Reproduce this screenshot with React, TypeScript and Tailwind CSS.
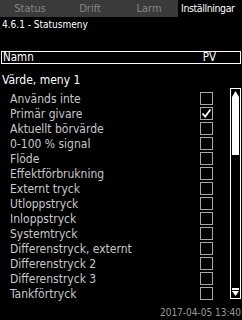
const items = [
  "Används inte",
  "Primär givare",
  "Aktuellt börvärde",
  "0-100 % signal",
  "Flöde",
  "Effektförbrukning",
  "Externt tryck",
  "Utloppstryck",
  "Inloppstryck",
  "Systemtryck",
  "Differenstryck, externt",
  "Differenstryck 2",
  "Differenstryck 3",
  "Tankförtryck",
];

const font = { fontFamily: '"DejaVu Sans Condensed", "DejaVu Sans", sans-serif' };

function Box({ checked }: { checked?: boolean }) {
  return (
    <div className="flex h-[13px] w-[13px] items-center justify-center border border-[#a8a8a8]">
      {checked ? (
        <svg width="11" height="11" viewBox="0 0 11 11">
          <path d="M1.5 5.5 L4.2 8.5 L9.5 1.5" fill="none" stroke="#fff" strokeWidth="1.8" />
        </svg>
      ) : null}
    </div>
  );
}

export default function App() {
  return (
    <div className="flex h-[320px] w-[242px] flex-col overflow-hidden bg-black text-[11px] leading-none text-white" style={font}>
      <div className="flex h-[17px] items-stretch">
        <div className="flex w-[178px] shrink-0 items-center bg-[#3a3a3a] text-[#858585]">
          <span className="w-[60px] text-center">Status</span>
          <span className="w-[60px] text-center">Drift</span>
          <span className="w-[58px] text-center">Larm</span>
        </div>
        <div className="flex min-w-0 flex-1 items-center whitespace-nowrap pl-[3px] text-[10.5px] tracking-[-0.4px] text-white">
          Inställningar
        </div>
      </div>
      <div className="px-[2px] pt-[3px] text-[10px]">4.6.1 - Statusmeny</div>

      <div className="mx-[1px] mt-[21px] flex h-[13px] items-center justify-between border border-white pl-[1px] pr-[24px] text-[11.5px]">
        <span>Namn</span>
        <span>PV</span>
      </div>

      <div className="px-[2px] pt-[10px] text-[12px]">Värde, meny 1</div>

      <div className="mt-[5px] flex">
        <div className="flex flex-1 flex-col">
          {items.map((it, i) => (
            <div key={it} className="flex h-[15px] items-center justify-between pl-[10px] pr-[17px] text-[12px] text-[#c8c8c8]">
              <span>{it}</span>
              <Box checked={i === 1} />
            </div>
          ))}
        </div>
        <div className="-mt-[3px] mr-[1px] flex h-[211px] w-[11px] flex-col items-center justify-between border border-white py-[2px]">
          <div className="flex flex-col items-center">
            <svg width="7" height="6" viewBox="0 0 7 6">
              <path d="M3.5 0 L7 6 L0 6 Z" fill="#fff" />
            </svg>
            <div className="h-[58px] w-[7px] bg-white" />
          </div>
          <svg width="7" height="8" viewBox="0 0 7 8">
            <rect x="0" y="0" width="7" height="2" fill="#fff" />
            <path d="M0 3 L7 3 L3.5 8 Z" fill="#fff" />
          </svg>
        </div>
      </div>

      <div className="mt-auto pb-[2px] pr-[1px] text-right text-[10px] text-[#9a9a9a]">2017-04-05 13:40</div>
    </div>
  );
}
